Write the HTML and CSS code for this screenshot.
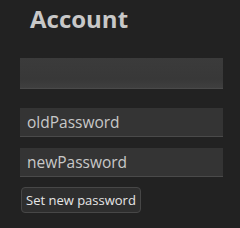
FILE: index.html
```html
<!DOCTYPE html>
<html lang="en">
<head>
  <meta charset="UTF-8" />
  <title>Account</title>
  <link rel="stylesheet" href="styles.css">
</head>
<body>
  <div class="account">
    <h1>Account</h1>

    <div class="avatar"></div>

    <form class="password-form" onsubmit="return false">
      <input type="password" class="field" placeholder="oldPassword">
      <input type="password" class="field" placeholder="newPassword">
      <button type="submit" class="btn">Set new password</button>
    </form>
  </div>
</body>
</html>
```

FILE: styles.css
```css
body {
  margin: 0;
  background-color: #222222;
  font-family: "Open Sans", sans-serif;
}

.account {
  padding: 0 17px 0 20px;
}

h1 {
  margin: 0;
  padding: 2px 0 0 10px;
  height: 56px;
  font-size: 24px;
  font-weight: 700;
  color: #c8c8c8;
}

.avatar {
  height: 30px;
  background: linear-gradient(180deg, #3b3b3b 0%, #383838 70%, #3f3f3f 100%);
  border-bottom: 1px solid #4a4a4a;
}

.password-form {
  display: flex;
  flex-direction: column;
  align-items: flex-start;
  gap: 11px;
  margin-top: 19px;
}

.field {
  box-sizing: border-box;
  width: 100%;
  height: 29px;
  margin: 0;
  padding: 0 7px;
  background: #343434;
  border: none;
  border-bottom: 1px solid #4a4a4a;
  color: #d0d0d0;
  font-family: inherit;
  font-size: 15.5px;
}

.field::placeholder {
  color: #c8c8c8;
}

.btn {
  margin: -1px 0 0 1px;
  height: 26px;
  padding: 0 4px;
  background: #2e2e2e;
  border: 1px solid #474747;
  border-radius: 4px;
  color: #e6e6e6;
  font-family: inherit;
  font-size: 13px;
}
```
